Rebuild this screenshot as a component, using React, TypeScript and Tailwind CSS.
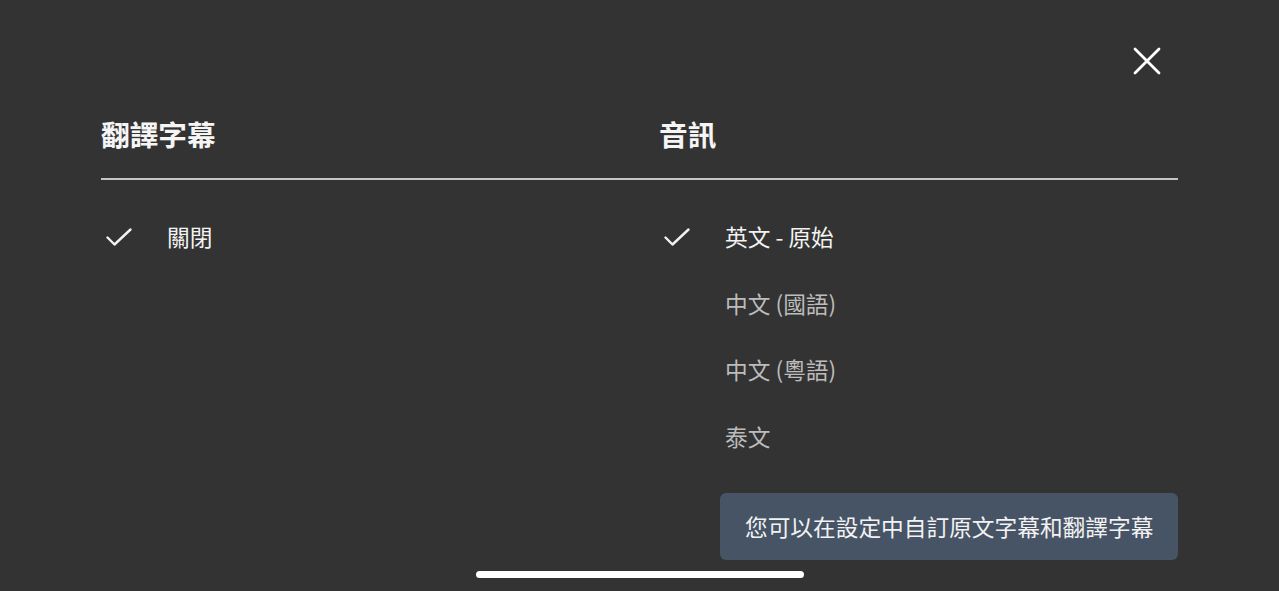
const audio = [
  { label: "英文 - 原始", selected: true },
  { label: "中文 (國語)", selected: false },
  { label: "中文 (粵語)", selected: false },
  { label: "泰文", selected: false },
];

function Check() {
  return (
    <svg width="26" height="19" viewBox="0 0 26 19" fill="none">
      <polyline
        points="1.5,9.5 8.5,16.5 24.5,1.5"
        stroke="#f2f2f2"
        strokeWidth="2.4"
        strokeLinecap="round"
        strokeLinejoin="round"
      />
    </svg>
  );
}

function Close() {
  return (
    <svg width="28" height="28" viewBox="0 0 28 28" fill="none">
      <path d="M2 2L26 26M26 2L2 26" stroke="#ffffff" strokeWidth="2.8" strokeLinecap="round" />
    </svg>
  );
}

function Row({ label, selected }: { label: string; selected: boolean }) {
  return (
    <div className="flex items-center h-[66.5px]">
      <div className="w-[66px] pl-[5px] flex items-center">
        {selected && <Check />}
      </div>
      <span
        className={`text-[22.7px] leading-[30px] ${
          selected ? "text-[#f2f2f2]" : "text-[#bcbcbc]"
        }`}
      >
        {label}
      </span>
    </div>
  );
}

export default function App() {
  return (
    <div
      className="relative w-[1279px] h-[591px] overflow-hidden bg-[#333333] px-[101px]"
      style={{ fontFamily: '"Noto Sans CJK TC", "Noto Sans", sans-serif' }}
    >
      {/* Close */}
      <div className="flex justify-end pt-[47px] pr-[17px]">
        <Close />
      </div>

      {/* Headings */}
      <div className="grid grid-cols-[558px_1fr] mt-[39px]">
        <h2 className="text-[28.7px] leading-[40px] font-bold text-[#f5f5f5]">翻譯字幕</h2>
        <h2 className="text-[28.7px] leading-[40px] font-bold text-[#f5f5f5]">音訊</h2>
      </div>

      <div className="mt-[24px] h-[2px] bg-[#c4c4c4]" />

      {/* Lists */}
      <div className="grid grid-cols-[558px_1fr] mt-[24px]">
        <div>
          <Row label="關閉" selected />
        </div>
        <div>
          {audio.map((a) => (
            <Row key={a.label} label={a.label} selected={a.selected} />
          ))}
        </div>
      </div>

      {/* Toast */}
      <div className="absolute left-[720px] top-[493px] w-[458px] h-[67px] rounded-[6px] bg-[#465466] flex items-center pl-[25px]">
        <span className="text-[22.7px] leading-[30px] text-[#f2f2f2]">
          您可以在設定中自訂原文字幕和翻譯字幕
        </span>
      </div>

      {/* Home indicator */}
      <div className="absolute left-[476px] top-[571px] w-[328px] h-[7px] rounded-full bg-white" />
    </div>
  );
}
